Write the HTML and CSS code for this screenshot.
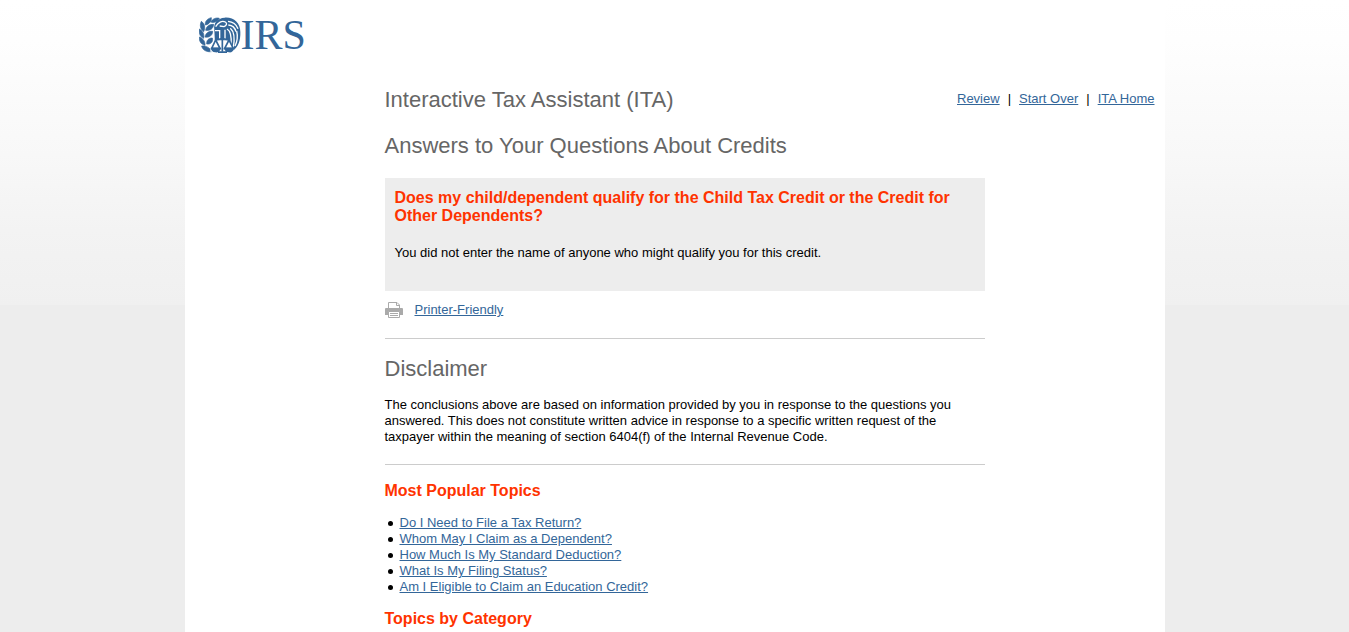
FILE: index.html
```html
<!DOCTYPE html>
<html lang="en">
<head>
<meta charset="utf-8">
<title>Interactive Tax Assistant (ITA)</title>
<link rel="stylesheet" href="styles.css">
</head>
<body>
<div class="page">
  <header class="masthead">
    <a class="logo" href="#" aria-label="IRS home">
      <svg class="emblem" viewBox="0 0 126 108" aria-hidden="true">
        <g fill="#336699" stroke="#336699" stroke-width="2">
          <path d="M19 24C17 13 25 5 37 2C38 12 31 22 19 24Z"/>
          <path d="M35 15C41 5 52 1 61 4C57 14 46 19 35 15Z"/>
          <path d="M14 44C3 37 2 23 7 13C17 20 20 32 14 44Z"/>
          <path d="M20 40C22 27 31 22 44 22C43 35 34 42 20 40Z"/>
          <path d="M14 64C2 60-1 47 1 36C11 41 17 52 14 64Z"/>
          <path d="M18 60C20 48 29 42 41 43C41 54 32 63 18 60Z"/>
          <path d="M18 85C5 82 0 71 1 60C12 64 19 73 18 85Z"/>
          <path d="M23 81C22 70 29 63 40 63C43 74 36 83 23 81Z"/>
          <path d="M38 104C21 106 10 98 8 87C21 85 34 93 38 104Z"/>
        </g>
        <path d="M46 38C43 19 55 3 77 2C104 0 124 17 124 45C125 70 117 91 102 101L93 80H48Z" fill="#336699"/>
        <g fill="none" stroke="#fff" stroke-width="4">
          <path d="M50 29C57 16 69 10 79 15C86 19 82 27 75 29L62 27"/>
          <path d="M48 41H62V68M78 38V68"/>
          <path d="M87 13C99 14 112 22 117 35M88 24C99 25 108 32 111 44"/>
          <path d="M84 36C95 42 98 57 96 82M94 34C107 45 107 68 103 91"/>
          <path d="M113 42C117 59 114 75 108 87"/>
        </g>
        <path d="M50 70H92L106 96V104H34V96Z" fill="#fff"/>
        <g fill="none" stroke="#336699" stroke-width="5">
          <path d="M70 60V104M48 69L70 65L92 69M50 69L38 94H63L50 69M90 69L77 94H103L90 69"/>
        </g>
        <path d="M35 92H66C64 103 56 107 49 106C41 105 36 100 35 92ZM74 92H106C104 103 97 107 90 106C82 105 76 100 74 92ZM57 103H84V108H57Z" fill="#336699"/>
      </svg>
      <span class="logo-name">IRS</span>
    </a>
  </header>

  <div class="title-row">
    <h1 class="title">Interactive Tax Assistant (ITA)</h1>
    <nav class="tools" aria-label="Assistant">
      <a href="#">Review</a><span>|</span><a href="#">Start Over</a><span>|</span><a href="#">ITA Home</a>
    </nav>
  </div>

  <main class="content">
    <h2 class="title">Answers to Your Questions About Credits</h2>

    <section class="answer">
      <h3 class="topic">Does my child/dependent qualify for the Child Tax Credit or the Credit for Other Dependents?</h3>
      <p>You did not enter the name of anyone who might qualify you for this credit.</p>
    </section>

    <div class="print">
      <svg class="print-icon" viewBox="0 0 18 16" aria-hidden="true">
        <path d="M3.5 7V.5H12L14.5 3V7M11.5 .5V3.5H14.5" fill="none" stroke="#aaa"/>
        <path d="M1 6H17Q18 6 18 7V13H0V7Q0 6 1 6Z" fill="#aaa"/>
        <path d="M3.5 9.5H14.5V15.5H3.5Z" fill="#fff" stroke="#aaa"/>
        <path d="M5 11.5H13M5 13.5H13" stroke="#aaa"/>
      </svg>
      <a href="#">Printer-Friendly</a>
    </div>

    <section class="disclaimer">
      <h2 class="title">Disclaimer</h2>
      <p>The conclusions above are based on information provided by you in response to the questions you answered. This does not constitute written advice in response to a specific written request of the taxpayer within the meaning of section 6404(f) of the Internal Revenue Code.</p>
    </section>

    <section class="popular">
      <h3 class="topic">Most Popular Topics</h3>
      <ul class="topics">
        <li><a href="#">Do I Need to File a Tax Return?</a></li>
        <li><a href="#">Whom May I Claim as a Dependent?</a></li>
        <li><a href="#">How Much Is My Standard Deduction?</a></li>
        <li><a href="#">What Is My Filing Status?</a></li>
        <li><a href="#">Am I Eligible to Claim an Education Credit?</a></li>
      </ul>
      <h3 class="topic">Topics by Category</h3>
    </section>
  </main>
</div>
</body>
</html>
```
FILE: styles.css
```css
* {
  box-sizing: border-box;
}

html {
  min-height: 100%;
  background: #ededed linear-gradient(#fff 0, #fefefe 40px, #fcfcfc 80px, #f8f8f8 155px, #f3f3f3 230px, #f0f0f0 305px) no-repeat;
  background-size: 100% 305px;
}

body {
  margin: 0;
  font: 13px/16px "Liberation Sans", Arial, sans-serif;
  color: #000;
}

h1, h2, h3, p, ul {
  margin: 0;
}

a {
  color: #336699;
}

.page {
  max-width: 980px;
  min-height: 100vh;
  margin: 0 auto;
  background: #fff;
}

.masthead {
  display: flex;
  padding: 16px 14px 0;
}

.logo {
  display: flex;
  align-items: center;
  height: 38px;
  text-decoration: none;
}

.emblem {
  width: 42px;
  height: 36px;
}

.logo-name {
  font: 42px/38px "Liberation Serif", "Times New Roman", serif;
}

.title-row {
  display: flex;
  justify-content: space-between;
  align-items: flex-start;
  padding: 33px 10px 0 200px;
}

.title {
  font-size: 22px;
  line-height: 26px;
  font-weight: normal;
  color: #666;
}

.tools {
  display: flex;
  gap: 8px;
  padding-top: 4px;
}

.content {
  max-width: 800px;
  padding: 20px 0 0 200px;
}

.answer {
  margin-top: 19px;
  padding: 11px 10px 30px;
  background: #ededed;
}

.topic {
  font-size: 16px;
  line-height: 18px;
  font-weight: bold;
  color: #ff3300;
}

.answer .topic {
  margin-bottom: 20px;
}

.print {
  display: flex;
  align-items: center;
  gap: 12px;
  padding: 11px 0 20px;
  border-bottom: 1px solid #ccc;
}

.print-icon {
  width: 18px;
  height: 16px;
}

.disclaimer {
  padding: 17px 0 19px;
  border-bottom: 1px solid #ccc;
}

.disclaimer p {
  margin-top: 15px;
}

.popular {
  padding-top: 17px;
}

.topics {
  margin: 15px 0;
  padding: 0;
  list-style: none;
}

.topics li {
  display: flex;
  align-items: center;
  gap: 7px;
  padding-left: 3px;
}

.topics li::before {
  content: "";
  width: 5px;
  height: 5px;
  border-radius: 50%;
  background: #000;
}
```
